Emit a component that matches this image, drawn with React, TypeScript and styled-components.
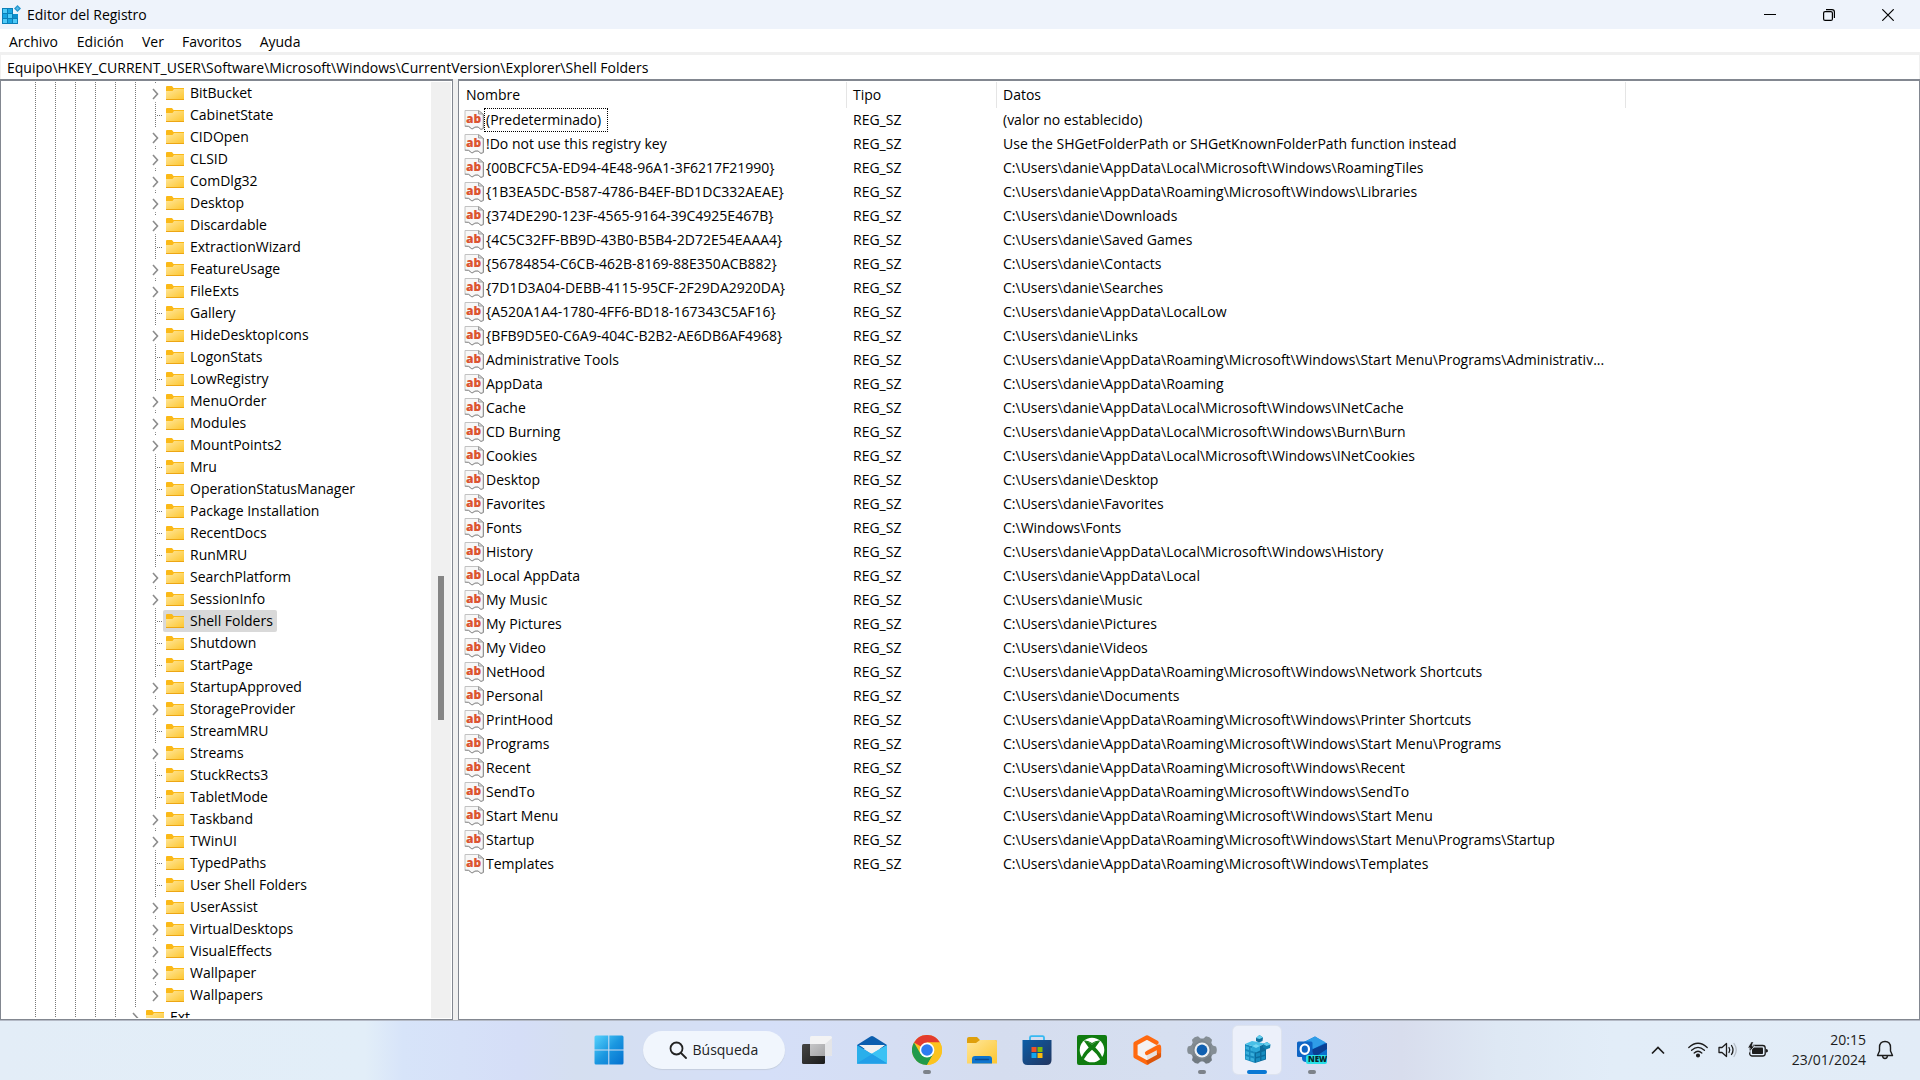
import React from "react";
import styled, { createGlobalStyle, css } from "styled-components";

const GlobalStyle = createGlobalStyle`
  *, *::before, *::after { box-sizing: border-box; }
  body {
    margin: 0;
    background: #f0f0f0;
    color: #000;
    font-family: "Segoe UI", "Open Sans", "Noto Sans", sans-serif;
    font-size: 14px;
    line-height: 22px;
    overflow: hidden;
  }
  button, input { font: inherit; color: inherit; border: 0; margin: 0; padding: 0; background: none; }
  ul { list-style: none; margin: 0; padding: 0; }
  svg { display: block; flex: none; }
`;

/* ---------- data ---------- */

const treeKeys: [string, boolean][] = [
  ["BitBucket", true],
  ["CabinetState", false],
  ["CIDOpen", true],
  ["CLSID", true],
  ["ComDlg32", true],
  ["Desktop", true],
  ["Discardable", true],
  ["ExtractionWizard", false],
  ["FeatureUsage", true],
  ["FileExts", true],
  ["Gallery", false],
  ["HideDesktopIcons", true],
  ["LogonStats", false],
  ["LowRegistry", false],
  ["MenuOrder", true],
  ["Modules", true],
  ["MountPoints2", true],
  ["Mru", false],
  ["OperationStatusManager", false],
  ["Package Installation", false],
  ["RecentDocs", false],
  ["RunMRU", false],
  ["SearchPlatform", true],
  ["SessionInfo", true],
  ["Shell Folders", false],
  ["Shutdown", false],
  ["StartPage", false],
  ["StartupApproved", true],
  ["StorageProvider", true],
  ["StreamMRU", false],
  ["Streams", true],
  ["StuckRects3", false],
  ["TabletMode", false],
  ["Taskband", true],
  ["TWinUI", true],
  ["TypedPaths", false],
  ["User Shell Folders", false],
  ["UserAssist", true],
  ["VirtualDesktops", true],
  ["VisualEffects", true],
  ["Wallpaper", true],
  ["Wallpapers", true],
];

const home = "C:\\Users\\danie\\";
const roaming = home + "AppData\\Roaming";
const roamingWin = roaming + "\\Microsoft\\Windows\\";
const localWin = home + "AppData\\Local\\Microsoft\\Windows\\";

const values: [string, string][] = [
  ["(Predeterminado)", "(valor no establecido)"],
  ["!Do not use this registry key", "Use the SHGetFolderPath or SHGetKnownFolderPath function instead"],
  ["{00BCFC5A-ED94-4E48-96A1-3F6217F21990}", localWin + "RoamingTiles"],
  ["{1B3EA5DC-B587-4786-B4EF-BD1DC332AEAE}", roamingWin + "Libraries"],
  ["{374DE290-123F-4565-9164-39C4925E467B}", home + "Downloads"],
  ["{4C5C32FF-BB9D-43B0-B5B4-2D72E54EAAA4}", home + "Saved Games"],
  ["{56784854-C6CB-462B-8169-88E350ACB882}", home + "Contacts"],
  ["{7D1D3A04-DEBB-4115-95CF-2F29DA2920DA}", home + "Searches"],
  ["{A520A1A4-1780-4FF6-BD18-167343C5AF16}", home + "AppData\\LocalLow"],
  ["{BFB9D5E0-C6A9-404C-B2B2-AE6DB6AF4968}", home + "Links"],
  ["Administrative Tools", roamingWin + "Start Menu\\Programs\\Administrativ..."],
  ["AppData", roaming],
  ["Cache", localWin + "INetCache"],
  ["CD Burning", localWin + "Burn\\Burn"],
  ["Cookies", localWin + "INetCookies"],
  ["Desktop", home + "Desktop"],
  ["Favorites", home + "Favorites"],
  ["Fonts", "C:\\Windows\\Fonts"],
  ["History", localWin + "History"],
  ["Local AppData", home + "AppData\\Local"],
  ["My Music", home + "Music"],
  ["My Pictures", home + "Pictures"],
  ["My Video", home + "Videos"],
  ["NetHood", roamingWin + "Network Shortcuts"],
  ["Personal", home + "Documents"],
  ["PrintHood", roamingWin + "Printer Shortcuts"],
  ["Programs", roamingWin + "Start Menu\\Programs"],
  ["Recent", roamingWin + "Recent"],
  ["SendTo", roamingWin + "SendTo"],
  ["Start Menu", roamingWin + "Start Menu"],
  ["Startup", roamingWin + "Start Menu\\Programs\\Startup"],
  ["Templates", roamingWin + "Templates"],
];

/* ---------- window chrome ---------- */

const Desktop = styled.div`
  display: flex;
  flex-direction: column;
  height: 100vh;
`;

const Window = styled.main`
  flex: 1;
  min-height: 0;
  display: flex;
  flex-direction: column;
`;

const TitleBar = styled.header`
  display: flex;
  align-items: center;
  height: 29px;
  padding-left: 2px;
  gap: 6px;
  background: #eef3fb;
`;

const Title = styled.h1`
  flex: 1;
  margin: 0;
  font-size: 14px;
  font-weight: 400;
`;

const CaptionButton = styled.button`
  display: grid;
  place-items: center;
  width: 59px;
  height: 29px;
`;

const CaptionButtons = styled.div`
  display: flex;
  padding-right: 3px;
`;

const MenuBar = styled.nav`
  display: flex;
  height: 23px;
  background: #fff;
`;

const MenuItem = styled.button`
  padding: 0 9px;
  height: 26px;
  line-height: 26px;
  &:first-child { padding-right: 10px; }
`;

const AddressRow = styled.div`
  display: flex;
  border: 1px solid #f0f0f0;
  border-top-width: 3px;
  border-bottom: 0;
  background: #fff;
`;

const AddressInput = styled.input`
  flex: 1;
  height: 24px;
  padding: 0 6px;
  outline: none;
`;

const Panes = styled.div`
  flex: 1;
  min-height: 0;
  display: flex;
  gap: 5px;
  background: #f0f0f0;
`;

const pane = css`
  border: 1px solid #828790;
  border-top: 2px solid #828790;
  background: #fff;
  overflow: hidden;
`;

/* ---------- key tree ---------- */

const TreePane = styled.section`
  ${pane}
  display: flex;
  flex: 0 0 453px;
  padding: 1px 1px 1px 0;
`;

const Tree = styled.ul`
  flex: 1;
  overflow: hidden;
`;

const TreeRow = styled.li`
  display: flex;
  height: 22px;
  padding-left: 24px;
`;

const Guide = styled.span`
  flex: none;
  width: 20px;
  background: repeating-linear-gradient(#777 0 1px, #fff 1px 2px) 10px 0 / 1px 22px no-repeat;
`;

const Expander = styled.button`
  display: block;
  width: 18px;
  height: 22px;
`;

const KeyButton = styled.button<{ $selected?: boolean }>`
  display: flex;
  align-items: center;
  gap: 6px;
  height: 22px;
  padding: 0 4px 0 3px;
  border-radius: 2px;
  white-space: nowrap;
  background: ${(p) => (p.$selected ? "#d9d9d9" : "transparent")};
`;

const ScrollTrack = styled.div`
  display: flex;
  flex-direction: column;
  align-items: center;
  width: 20px;
  background: #f0f0f0;
`;

const ScrollSpace = styled.div<{ $grow: number }>`
  flex: ${(p) => p.$grow} 0 0;
`;

const ScrollThumb = styled.div`
  flex: 144 0 0;
  width: 6px;
  background: #858585;
`;

/* ---------- value list ---------- */

const ListPane = styled.section`
  ${pane}
  flex: 1;
  min-width: 0;
  padding-top: 1px;
`;

const ValueTable = styled.table`
  width: 100%;
  table-layout: fixed;
  border-collapse: separate;
  border-spacing: 0;
  white-space: nowrap;
`;

const Col = styled.col<{ $width?: number }>`
  width: ${(p) => (p.$width ? p.$width + "px" : "auto")};
`;

const HeadCell = styled.th`
  height: 26px;
  padding: 0 0 0 6px;
  font-weight: 400;
  text-align: left;
  border-right: 1px solid #e5e5e5;
  &:first-child { padding-left: 7px; }
  &:last-child { border-right: 0; }
`;

const Cell = styled.td`
  height: 24px;
  padding: 0 0 0 6px;
  overflow: hidden;
`;

const NameCell = styled(Cell)`
  padding-left: 5px;
`;

const NameContent = styled.span`
  display: flex;
  align-items: center;
`;

const ValueName = styled.span<{ $focused?: boolean }>`
  height: 24px;
  padding: 0 6px 0 1px;
  border: 1px dotted ${(p) => (p.$focused ? "#000" : "transparent")};
`;

/* ---------- taskbar ---------- */

const TaskBar = styled.footer`
  display: grid;
  grid-template-columns: 1fr auto 1fr;
  align-items: center;
  height: 60px;
  box-shadow: inset 0 1px #b4bac6;
  background: linear-gradient(
    90deg,
    #e3edf7 0%,
    #e2eef8 19%,
    #d7e4f9 21%,
    #d5def7 27%,
    #d5dff0 30%,
    #d5dff8 40%,
    #d5ddef 52%,
    #d6dff0 61%,
    #d4def5 66%,
    #d8dded 73%,
    #dee8f4 78%,
    #e2edf8 84%,
    #e2ecf7 100%
  );
`;

const TaskItems = styled.div`
  grid-column: 2;
  display: flex;
  align-items: center;
  gap: 7px;
`;

const TaskButton = styled.button<{ $active?: boolean }>`
  display: grid;
  place-items: center;
  position: relative;
  width: 48px;
  height: 48px;
  border-radius: 5px;
  background: ${(p) => (p.$active ? "#ecf0fa" : "transparent")};
  box-shadow: ${(p) => (p.$active ? "0 0 0 1px #dde3ef" : "none")};
`;

const RunMark = styled.span<{ $active?: boolean }>`
  position: absolute;
  left: 50%;
  bottom: 0;
  transform: translateX(-50%);
  width: ${(p) => (p.$active ? 20 : 8)}px;
  height: 4px;
  border-radius: 2px;
  background: ${(p) => (p.$active ? "#0a78d4" : "#7c828a")};
`;

const SearchBox = styled.button`
  display: flex;
  align-items: center;
  gap: 6px;
  width: 142px;
  height: 38px;
  margin: 0 1px 0 3px;
  padding-left: 26px;
  border-radius: 19px;
  background: #f1f6fd;
  box-shadow: 0 1px 1px #c5cede;
  color: #222;
`;

const Tray = styled.div`
  grid-column: 3;
  justify-self: end;
  display: flex;
  align-items: center;
  padding-right: 20px;
`;

const TrayButton = styled.button`
  display: grid;
  place-items: center;
  width: 30px;
  height: 40px;
`;

const TrayChevron = styled(TrayButton)`
  margin-right: 10px;
`;

const Clock = styled.button`
  margin: 0 4px 0 19px;
  text-align: right;
  line-height: 20px;
  color: #1c1c1c;
`;

/* ---------- icons ---------- */

const RegeditSmall = () => (
  <svg width="19" height="20" viewBox="0 0 19 20">
    <rect x="0" y="3" width="16" height="16" fill="#0b7fb8" />
    {[0, 1, 2].map((r) =>
      [0, 1, 2].map((c) => (
        <rect key={`${r}${c}`} x={1 + c * 5} y={4 + r * 5} width="4" height="4" fill={(r + c) % 2 ? "#18a5e2" : "#4fcaf7"} />
      ))
    )}
    <rect x="11" y="2" width="6" height="7" fill="#eef3fb" />
    <rect x="11" y="9" width="5" height="4" fill="#0f8fcc" />
    <path d="M15.500 0l3.500 3.500-3.500 3.500L12 3.500z" fill="#2697cf" />
    <path d="M15.500 1.800l1.700 1.700-1.700 1.700-1.700-1.700z" fill="#58b9e6" />
  </svg>
);

const FolderIcon = () => (
  <svg width="18" height="16" viewBox="0 0 18 16">
    <path d="M0 2q0-1 1-1h5l1.500 2H18v11H0z" fill="#fbb917" />
    <path d="M0 6h6.500L8 4h10v10.500H0z" fill="url(#folderFace)" />
    <path d="M0 14h18v1H0z" fill="#eda613" />
  </svg>
);

const StringIcon = () => (
  <svg width="20" height="20" viewBox="0 0 20 20">
    <path d="M1 .5h13.500L19 4v14l-2 1.500-3-2.500-3 .5-3 1.500-3-3-4 .5z" fill="#f7f7f7" stroke="#c2c2c2" />
    <path d="M1 16l3.500.5L8 19l3-2h3l3 2.500 2.500-1V4" fill="none" stroke="#929292" />
    <path d="M14.500.5V4H19z" fill="#dcdcdc" stroke="#a0a0a0" />
    <text x="2" y="13" fontFamily="Open Sans, sans-serif" fontSize="12" fontWeight="800" fill="#dc5330">ab</text>
  </svg>
);

const LeafLines = () => (
  <svg width="18" height="22" viewBox="0 0 18 22" shapeRendering="crispEdges">
    <path d="M10.500 0v22M12 11.500h6" stroke="#777" strokeDasharray="1 1" />
  </svg>
);

const ExpanderLines = ({ last }: { last?: boolean }) => (
  <svg width="18" height="22" viewBox="0 0 18 22">
    <path d="M10 0h1v1h-1z" fill="#777" />
    {!last && <path d="M10 20h1v1h-1z" fill="#999" />}
    <path d="M8 7l4.500 5L8 17" fill="none" stroke="#8c8c8c" strokeWidth="1.600" />
  </svg>
);

const StartIcon = () => (
  <svg width="30" height="30" viewBox="0 0 30 30">
    <path d="M2 .5h12.300v14H.5V2Q.5.500 2 .5zM15.300.5H28q1.500 0 1.500 1.500v12.500H15.300zM.5 15.500h13.800v14H2Q.5 29.500.5 28zM15.300 15.500h14.200V28q0 1.500-1.500 1.500H15.300z" fill="url(#startBlue)" />
  </svg>
);

const SearchIcon = () => (
  <svg width="18" height="18" viewBox="0 0 18 18" fill="none" stroke="#222" strokeWidth="1.800" strokeLinecap="round">
    <circle cx="7.500" cy="7.500" r="6" />
    <path d="M12 12l5 5" />
  </svg>
);

const TaskViewIcon = () => (
  <svg width="30" height="30" viewBox="0 0 30 30">
    <rect x="0" y="9" width="23" height="20" rx="1.500" fill="url(#dark)" />
    <rect x="8" y="1" width="22" height="20" rx="1.500" fill="#f3f3f4" />
    <path d="M8 9h15v12H9.500Q8 21 8 19.500z" fill="url(#grayOverlap)" />
    <path d="M23 21V9l7-6v16.500q0 1.500-1.500 1.500z" fill="#e4e5e8" />
  </svg>
);

const MailIcon = () => (
  <svg width="30" height="30" viewBox="0 0 30 30">
    <path d="M0 10L13.500 1.500q1.500-1 3 0L30 10v4H0z" fill="#0c5eae" />
    <path d="M3.500 10h24L15 20z" fill="#f1f1f1" />
    <path d="M15 18L30 10v18.500H0z" fill="#3cc2f4" />
    <path d="M0 10l30 18.500H0z" fill="#1b97e0" />
    <path d="M15 19.200L0 28.500h30z" fill="#229fe8" />
    <path d="M0 10.500L15 19.200 0 28.500z" fill="#2aafeb" />
    <path d="M2 10h26L15 18.500z" fill="#f1f1f1" />
  </svg>
);

const ChromeIcon = () => (
  <svg width="30" height="30" viewBox="0 0 30 30">
    <circle cx="15" cy="15" r="15" fill="#fcc31e" />
    <path d="M15 15L2 7.500A15 15 0 0 1 28 7.500H15z" fill="#e33b2e" />
    <path d="M2 7.500a15 15 0 0 0 13 22.500l6.500-11.200L15 15 8.500 18.700z" fill="#219a4b" />
    <path d="M21.500 18.700L15 30A15 15 0 0 0 28 7.500H15z" fill="#fcc31e" />
    <circle cx="15" cy="15" r="7.400" fill="#fff" />
    <circle cx="15" cy="15" r="5.800" fill="#2e7cf0" />
  </svg>
);

const ExplorerIcon = () => (
  <svg width="30" height="30" viewBox="0 0 30 30">
    <path d="M0 4q0-2 2-2h8l3 3h15q2 0 2 2v8H0z" fill="#dfa00c" />
    <path d="M0 8h9l4-3h15q2 0 2 2v21.500H0z" fill="url(#folderFace)" />
    <path d="M5 28.500V24q0-3 3-3h14q3 0 3 3v4.500z" fill="#0e74cd" />
    <path d="M8.500 24.500h13" stroke="#0a4b91" strokeWidth="1.300" strokeLinecap="round" />
  </svg>
);

const StoreIcon = () => (
  <svg width="30" height="30" viewBox="0 0 30 30">
    <path d="M8 7V2.500Q8 1.200 9.500 1.200h11Q22 1.200 22 2.500V7" fill="none" stroke="#37b9f2" strokeWidth="1.800" />
    <path d="M.5 5h29v20q0 5-5 5h-19q-5 0-5-5z" fill="url(#storeBlue)" />
    <path d="M9.500 12h5v5h-5z" fill="#f25325" />
    <path d="M15.500 12h5v5h-5z" fill="#80bb0a" />
    <path d="M9.500 18h5v5h-5z" fill="#10a6f0" />
    <path d="M15.500 18h5v5h-5z" fill="#fdb90c" />
  </svg>
);

const XboxIcon = () => (
  <svg width="30" height="30" viewBox="0 0 30 30">
    <rect width="30" height="30" rx="2" fill="#107c10" />
    <circle cx="15" cy="15" r="12.300" fill="#fff" />
    <path d="M7 5.500q4-.5 8 2.500 4-3 8-2.500l-1.500 1Q18 6.500 15 9.300 12 6.500 8.500 6.500z" fill="#107c10" />
    <path d="M7 6q4.500 0 8 3.600Q18.500 6 23 6l-4.700 6.500q6 6 7 10l-2 2Q20.500 19 15 14.700 9.500 19 6.700 24.500l-2-2q1-4 7-10z" fill="#107c10" />
  </svg>
);

const OrangeGIcon = () => (
  <svg width="30" height="30" viewBox="0 0 30 30">
    <path d="M15 2L26.500 8.500v13L15 28 3.500 21.500v-13z" fill="#f4f2f1" />
    <path d="M15 15l11.500-6v12.500L15 28z" fill="#e6e2e0" />
    <path d="M24.500 7.700L15 2.300 3.500 8.600v12.800L15 27.700" fill="none" stroke="#ff690f" strokeWidth="4.200" strokeLinejoin="round" strokeLinecap="round" />
    <path d="M15 27.700l12-6.500v-8.500" fill="none" stroke="#dc560b" strokeWidth="4.200" strokeLinejoin="round" />
    <path d="M15 18l12-6.300v5" fill="none" stroke="#ff690f" strokeWidth="4.200" strokeLinejoin="round" strokeLinecap="round" />
  </svg>
);

const SettingsIcon = () => (
  <svg width="30" height="30" viewBox="0 0 30 30">
    <circle cx="15" cy="15" r="11.500" fill="#7d868d" />
    {[30, 90, 150, 210, 270, 330].map((a) => (
      <path key={a} d="M10 6l1.500-5q3.500-1.600 7 0L20 6z" fill={a > 90 && a < 270 ? "#717a81" : "#858e95"} transform={`rotate(${a} 15 15)`} />
    ))}
    <circle cx="15" cy="15" r="7.500" fill="#eef1f4" />
    <circle cx="15" cy="15" r="5.400" fill="#1160b0" />
  </svg>
);

const RegeditIcon = () => (
  <svg width="30" height="30" viewBox="0 0 30 30">
    <path d="M3 9l10 3v16L3 24.500z" fill="#1689bd" />
    <path d="M13 12l11-3v15.500L13 28z" fill="#0b6c9d" />
    <path d="M3 9l7-3 6 1 8 2-11 3z" fill="#48c0e7" />
    <path d="M3.700 11l3.300 1v3l-3.300-1zM8.500 12.500l3.500 1v3l-3.500-1zM3.700 16l3.300 1v3l-3.300-1zM8.500 17.500l3.500 1v3l-3.500-1zM3.700 21l3.300 1v3l-3.300-1zM8.500 22.500l3.500 1v3l-3.500-1z" fill="#39afdb" />
    <path d="M14 18.500l4-1v3.500l-4 1zM19.500 17l3.500-1v3.500l-3.500 1zM14 23.500l4-1V26l-4 1zM19.500 22l3.500-1v3l-3.500 1z" fill="#178dc0" />
    <path d="M10 11l4-2 4 2v4.500L14 17.500l-4-2z" fill="#2aa7d7" />
    <path d="M10 11l4-2 4 2-4 2z" fill="#75d8f4" />
    <path d="M14 3l3.500-3L21 2.500 20.500 6 17 7.500 14 6z" fill="#0d719f" />
    <path d="M14 3l3.500-3L21 2.500 17.500 4z" fill="#64cfee" />
    <path d="M21 9l4-2 3.500 2.500L28 13l-4 1.500-3-2z" fill="#0f7eae" />
    <path d="M21 9l4-2 3.500 2.500L24.500 11z" fill="#64cfee" />
  </svg>
);

const OutlookIcon = () => (
  <svg width="30" height="30" viewBox="0 0 30 30">
    <path d="M5 8L18 1.500 30 9v16q0 2-2 2H9q-4 0-4-4z" fill="#0b6fce" />
    <path d="M7 7l11-5.500L29 7.500 16 14z" fill="#2f9de8" />
    <path d="M14 15L30 8v6L18 22z" fill="#0a3f93" />
    <rect y="6.500" width="15.500" height="15.500" rx="1.500" fill="#0f65c4" />
    <ellipse cx="7.800" cy="14.200" rx="4.200" ry="4.700" fill="none" stroke="#fff" strokeWidth="2.200" />
    <rect x="9" y="20" width="21" height="9" rx="2" fill="#27e0e8" />
    <text x="11" y="27.300" fontFamily="Open Sans, sans-serif" fontSize="8" fontWeight="800" fill="#06272c">NEW</text>
  </svg>
);

const WifiIcon = () => (
  <svg width="20" height="16" viewBox="0 0 20 16" fill="none" stroke="#1c1c1c" strokeWidth="1.300" strokeLinecap="round">
    <path d="M.8 5.500q9.200-8.500 18.400 0M3.600 8.300q6.400-5.800 12.800 0M6.200 11q3.800-3.400 7.600 0" />
    <circle cx="10" cy="13.500" r="1.400" fill="#1c1c1c" />
  </svg>
);

const VolumeIcon = () => (
  <svg width="20" height="16" viewBox="0 0 20 16" fill="none" stroke="#1c1c1c" strokeWidth="1.300" strokeLinecap="round" strokeLinejoin="round">
    <path d="M1 5.500h3L8.500 1.500v13L4 10.500H1z" />
    <path d="M11 5.500q1.500 2.500 0 5M13.500 3.500q3 4.500 0 9" />
    <path d="M16 1.500q4.500 6.500 0 13" stroke="#b5bcc5" />
  </svg>
);

const BatteryIcon = () => (
  <svg width="20" height="16" viewBox="0 0 20 16">
    <rect x="1.700" y="3.500" width="15.500" height="10.500" rx="2.500" fill="none" stroke="#1c1c1c" strokeWidth="1.300" />
    <rect x="4" y="5.500" width="11" height="6.500" rx=".8" fill="#1c1c1c" />
    <path d="M18 7q2 0 2 1.800T18 10.500z" fill="#1c1c1c" />
    <path d="M3.500-.5L-.5 6h2.600L1 10.500 6.800 4H4.200L5.500-.5z" fill="#1c1c1c" stroke="#e2ecf7" strokeWidth=".8" />
  </svg>
);

const BellIcon = () => (
  <svg width="18" height="20" viewBox="0 0 18 20" fill="none" stroke="#1c1c1c" strokeWidth="1.400" strokeLinejoin="round">
    <path d="M9 1.500q5.500 0 5.500 6v3.500l2 4.500h-15l2-4.500V7.500q0-6 5.500-6z" />
    <path d="M6.500 16q.5 2.500 2.500 2.500t2.500-2.500" />
  </svg>
);

const PaintDefs = styled.svg`
  position: absolute;
`;

const SharedPaints = () => (
  <PaintDefs width="0" height="0" aria-hidden="true">
    <defs>
      <linearGradient id="folderFace" x1="0" y1="0" x2="1" y2="1">
        <stop offset="0" stopColor="#ffe79c" />
        <stop offset="1" stopColor="#fdc62f" />
      </linearGradient>
      <linearGradient id="startBlue" x1="0" y1="0" x2="1" y2="1">
        <stop offset="0" stopColor="#56d2fc" />
        <stop offset=".5" stopColor="#1b97e0" />
        <stop offset="1" stopColor="#0470cf" />
      </linearGradient>
      <linearGradient id="dark" x1="0" y1="0" x2="1" y2="1">
        <stop offset="0" stopColor="#454545" />
        <stop offset="1" stopColor="#1c1c1c" />
      </linearGradient>
      <linearGradient id="grayOverlap" x1="0" y1="0" x2="1" y2="1">
        <stop offset="0" stopColor="#c6c6c8" />
        <stop offset="1" stopColor="#a5a5a7" />
      </linearGradient>
      <linearGradient id="storeBlue" x1="0" y1="0" x2="1" y2="1">
        <stop offset="0" stopColor="#0c5ea8" />
        <stop offset="1" stopColor="#22355f" />
      </linearGradient>
    </defs>
  </PaintDefs>
);

/* ---------- composed parts ---------- */

type KeyRowProps = { name: string; depth: number; expandable: boolean; selected?: boolean; last?: boolean };

const KeyRow = ({ name, depth, expandable, selected, last }: KeyRowProps) => (
  <TreeRow>
    {Array.from({ length: depth }, (_, i) => (
      <Guide key={i} />
    ))}
    {expandable ? (
      <Expander aria-label={`Expandir ${name}`}>
        <ExpanderLines last={last} />
      </Expander>
    ) : (
      <LeafLines />
    )}
    <KeyButton $selected={selected}>
      <FolderIcon />
      {name}
    </KeyButton>
  </TreeRow>
);

const apps: { label: string; icon: React.ReactNode; running?: boolean; active?: boolean }[] = [
  { label: "Vista de tareas", icon: <TaskViewIcon /> },
  { label: "Correo", icon: <MailIcon /> },
  { label: "Google Chrome", icon: <ChromeIcon />, running: true },
  { label: "Explorador de archivos", icon: <ExplorerIcon /> },
  { label: "Microsoft Store", icon: <StoreIcon /> },
  { label: "Xbox", icon: <XboxIcon /> },
  { label: "Gaming", icon: <OrangeGIcon /> },
  { label: "Configuración", icon: <SettingsIcon />, running: true },
  { label: "Editor del Registro", icon: <RegeditIcon />, running: true, active: true },
  { label: "Outlook", icon: <OutlookIcon />, running: true },
];

export default function App() {
  return (
    <Desktop>
      <GlobalStyle />
      <SharedPaints />
      <Window>
        <TitleBar>
          <RegeditSmall />
          <Title>Editor del Registro</Title>
          <CaptionButtons>
            <CaptionButton aria-label="Minimizar">
              <svg width="12" height="12" viewBox="0 0 12 12"><path d="M0 5.500h12" stroke="#000" /></svg>
            </CaptionButton>
            <CaptionButton aria-label="Restaurar">
              <svg width="12" height="12" viewBox="0 0 12 12" fill="none" stroke="#000" strokeWidth="1.200">
                <rect x=".6" y="2.600" width="8.800" height="8.800" rx="1.500" />
                <path d="M3 .6h6q2.400 0 2.400 2.400v6" />
              </svg>
            </CaptionButton>
            <CaptionButton aria-label="Cerrar">
              <svg width="12" height="12" viewBox="0 0 12 12"><path d="M.3.3l11.400 11.400M11.700.3L.3 11.700" stroke="#000" strokeWidth="1.200" /></svg>
            </CaptionButton>
          </CaptionButtons>
        </TitleBar>
        <MenuBar>
          {["Archivo", "Edición", "Ver", "Favoritos", "Ayuda"].map((m) => (
            <MenuItem key={m}>{m}</MenuItem>
          ))}
        </MenuBar>
        <AddressRow>
          <AddressInput
            aria-label="Ruta de la clave"
            defaultValue={"Equipo\\HKEY_CURRENT_USER\\Software\\Microsoft\\Windows\\CurrentVersion\\Explorer\\Shell Folders"}
          />
        </AddressRow>
        <Panes>
          <TreePane>
            <Tree>
              {treeKeys.map(([name, expandable], i) => (
                <KeyRow
                  key={name}
                  name={name}
                  depth={6}
                  expandable={expandable}
                  selected={name === "Shell Folders"}
                  last={i === treeKeys.length - 1}
                />
              ))}
              <KeyRow name="Ext" depth={5} expandable />
            </Tree>
            <ScrollTrack>
              <ScrollSpace $grow={494} />
              <ScrollThumb />
              <ScrollSpace $grow={298} />
            </ScrollTrack>
          </TreePane>
          <ListPane>
            <ValueTable>
              <colgroup>
                <Col $width={388} />
                <Col $width={150} />
                <Col $width={629} />
                <Col />
              </colgroup>
              <thead>
                <tr>
                  <HeadCell>Nombre</HeadCell>
                  <HeadCell>Tipo</HeadCell>
                  <HeadCell>Datos</HeadCell>
                  <HeadCell aria-hidden="true" />
                </tr>
              </thead>
              <tbody>
                {values.map(([name, data], i) => (
                  <tr key={name}>
                    <NameCell>
                      <NameContent>
                        <StringIcon />
                        <ValueName $focused={i === 0}>{name}</ValueName>
                      </NameContent>
                    </NameCell>
                    <Cell>REG_SZ</Cell>
                    <Cell>{data}</Cell>
                    <Cell />
                  </tr>
                ))}
              </tbody>
            </ValueTable>
          </ListPane>
        </Panes>
      </Window>
      <TaskBar>
        <TaskItems>
          <TaskButton aria-label="Inicio"><StartIcon /></TaskButton>
          <SearchBox><SearchIcon />Búsqueda</SearchBox>
          {apps.map((a) => (
            <TaskButton key={a.label} aria-label={a.label} $active={a.active}>
              {a.icon}
              {a.running && <RunMark $active={a.active} />}
            </TaskButton>
          ))}
        </TaskItems>
        <Tray>
          <TrayChevron aria-label="Mostrar iconos ocultos">
            <svg width="14" height="9" viewBox="0 0 14 9"><path d="M1 7.500l6-6 6 6" fill="none" stroke="#1c1c1c" strokeWidth="1.700" /></svg>
          </TrayChevron>
          <TrayButton aria-label="Red"><WifiIcon /></TrayButton>
          <TrayButton aria-label="Volumen"><VolumeIcon /></TrayButton>
          <TrayButton aria-label="Batería"><BatteryIcon /></TrayButton>
          <Clock>20:15<br />23/01/2024</Clock>
          <TrayButton aria-label="Notificaciones"><BellIcon /></TrayButton>
        </Tray>
      </TaskBar>
    </Desktop>
  );
}
